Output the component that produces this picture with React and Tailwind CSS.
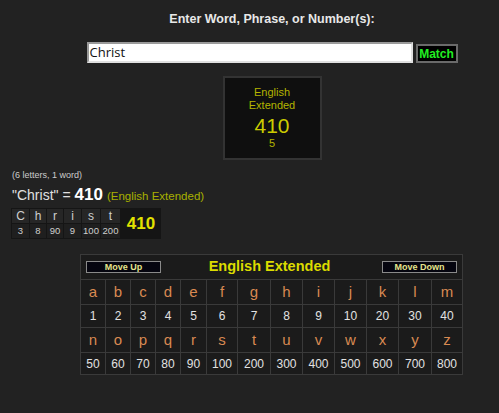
const letters1 = [
  ['a', 1], ['b', 2], ['c', 3], ['d', 4], ['e', 5], ['f', 6], ['g', 7],
  ['h', 8], ['i', 9], ['j', 10], ['k', 20], ['l', 30], ['m', 40],
];
const letters2 = [
  ['n', 50], ['o', 60], ['p', 70], ['q', 80], ['r', 90], ['s', 100], ['t', 200],
  ['u', 300], ['v', 400], ['w', 500], ['x', 600], ['y', 700], ['z', 800],
];
const word = [['C', 3], ['h', 8], ['r', 90], ['i', 9], ['s', 100], ['t', 200]];
const wordCols = ['w-[17px]', 'w-[16px]', 'w-[16px]', 'w-[17px]', 'w-[18px]', 'w-[19px]'];

function SmallButton({ children }) {
  return (
    <button className="h-[12px] w-[75px] border border-[#8a8a8a] bg-[#05050f] text-[9px] font-bold leading-[10px] text-[#e4e48c]">
      {children}
    </button>
  );
}

function LetterRow({ items }) {
  return items.map(([l]) => (
    <div key={l} className="flex h-[24px] items-center justify-center bg-[#1b1b1b] text-[15px] text-[#d98a52]">
      {l}
    </div>
  ));
}

function NumberRow({ items, h }) {
  return items.map(([l, n]) => (
    <div key={l} className={`flex ${h} items-center justify-center bg-[#1b1b1b] text-[12px] text-[#e2e2e2]`}>
      {n}
    </div>
  ));
}

export default function App() {
  return (
    <div className="min-h-screen w-full bg-[#222222] font-['Liberation_Sans',Arial,sans-serif] text-[#dddddd]">
      <div className="flex flex-col items-center pl-[45px] pt-[11px]">
        <h1 className="text-[12.5px] font-bold leading-[16px] text-[#e8e8e8]">Enter Word, Phrase, or Number(s):</h1>
        <div className="mt-[15px] flex items-center gap-[3px]">
          <div className="flex h-[21px] w-[326px] items-center border-2 border-[#9a9a9a] border-r-[#e0e0e0] border-b-[#e0e0e0] bg-white pl-[1px] font-['Open_Sans',sans-serif] text-[13px] text-[#111]">
            Christ
          </div>
          <button className="mt-[2px] h-[19px] w-[42px] border-2 border-[#6a6a6a] bg-black text-[12px] font-bold leading-[14px] text-[#22ee22]">
            Match
          </button>
        </div>
        <div className="mt-[13px] flex h-[84px] w-[99px] flex-col items-center border-2 border-[#333333] bg-[#0f0f0f] pt-[8px] text-[#b4b400]">
          <div className="text-[11px] leading-[13px]">English</div>
          <div className="text-[11px] leading-[13px]">Extended</div>
          <div className="mt-[3px] text-[21px] leading-[22px] text-[#cccc00]">410</div>
          <div className="text-[11px] leading-[13px]">5</div>
        </div>
      </div>

      <div className="ml-[12px] mt-[10px] text-[9px] leading-[11px] text-[#cccccc]">(6 letters, 1 word)</div>
      <div className="ml-[12px] mt-[4px] flex items-baseline leading-[20px]">
        <span className="text-[14px] text-[#e0e0e0]">"Christ" =</span>
        <span className="ml-[4px] text-[17px] font-bold text-white">410</span>
        <span className="ml-[4px] text-[11.5px] text-[#a8b000]">(English Extended)</span>
      </div>
      <div className="ml-[11px] mt-[2px] flex w-[150px] bg-[#151515]">
        <div className="flex gap-px p-px">
          {word.map(([l, n], i) => (
            <div key={i} className={`flex flex-col gap-px ${wordCols[i]}`}>
              <div className="flex h-[14px] items-center justify-center bg-[#262626] text-[12px] text-[#cfcfcf]">{l}</div>
              <div className="flex h-[14px] items-center justify-center bg-[#1f1f1f] text-[9.5px] text-[#cfcfcf]">{n}</div>
            </div>
          ))}
        </div>
        <div className="flex flex-1 items-center justify-center text-[17px] font-bold text-[#e2e200]">410</div>
      </div>

      <div className="ml-[80px] mt-[15px] grid w-[383px] grid-cols-[24px_24px_24px_24px_25px_30px_32px_31px_31px_31px_31px_32px_30px] gap-px border border-[#3a3a3a] bg-[#3a3a3a]">
        <div className="col-span-13 flex h-[24px] items-center justify-between bg-[#1b1b1b] px-[5px]">
          <SmallButton>Move Up</SmallButton>
          <div className="ml-[-4px] text-[14.5px] font-bold text-[#dcdc00]">English Extended</div>
          <SmallButton>Move Down</SmallButton>
        </div>
        <LetterRow items={letters1} />
        <NumberRow items={letters1} h="h-[22px]" />
        <LetterRow items={letters2} />
        <NumberRow items={letters2} h="h-[21px]" />
      </div>
    </div>
  );
}
